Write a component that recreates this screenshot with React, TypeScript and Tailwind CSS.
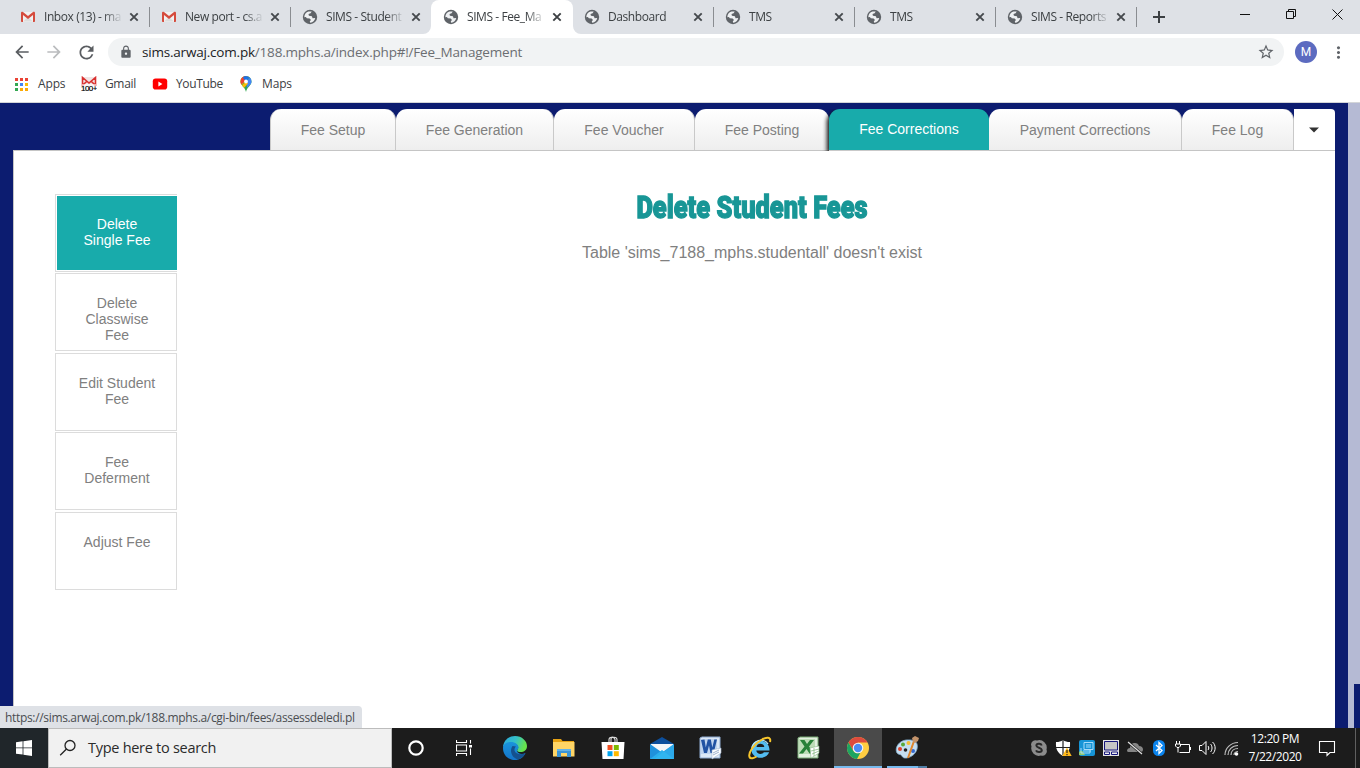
import type { ReactNode } from "react";
import { MdArrowBack, MdArrowForward, MdRefresh, MdLock, MdStarBorder, MdMoreVert } from "react-icons/md";

const GmailIcon = () => (
  <svg width="16" height="16" viewBox="0 0 16 16">
    <path d="M2 3h12v10H2z" fill="#f1f1f1" />
    <path d="M3 12.5 8 8l5 4.5z" fill="#dcdcdc" />
    <path d="M1 4v8.3c0 .5.3.7.8.7H3V6l5 4 5-4v7h1.200c.5 0 .8-.2.8-.7V4c0-1.200-1.200-1.500-2-.9L8 7 3 3.100C2.200 2.500 1 2.800 1 4z" fill="#d54b3d" />
  </svg>
);

const GlobeIcon = () => (
  <svg width="16" height="16" viewBox="0 0 16 16">
    <circle cx="8" cy="8" r="7.200" fill="#5f6368" />
    <path d="M2.300 8.200C2.300 5.500 4 3.100 6.500 2.500L9.700 2.600 8.600 4.300 6.500 5 6.900 6.800 9.900 7.200 10.600 9.200 13.200 9.100C12.900 11.700 10.800 13.500 8.200 13.700L7.800 12.300 9 10.900 7.600 9.400 4.800 9.300 3.900 8.100z" fill="#eef0f2" />
    <path d="m9.500 4.800 2.300-.6 1.300 2.300-2.100.4z" fill="#5f6368" />
  </svg>
);

const CloseX = ({ active }: { active?: boolean }) => (
  <svg width="10" height="10" viewBox="0 0 10 10" className={active ? "text-[#3c4043]" : "text-[#45494d]"}>
    <path d="m1.300 1.300 7.400 7.400m0-7.400L1.300 8.700" stroke="currentColor" strokeWidth="1.900" />
  </svg>
);

type Tab = { title: string; kind: "gmail" | "globe"; active?: boolean; divider?: boolean };

const browserTabs: Tab[] = [
  { title: "Inbox (13) - ma", kind: "gmail", divider: true },
  { title: "New port - cs.a", kind: "gmail", divider: true },
  { title: "SIMS - Student", kind: "globe" },
  { title: "SIMS - Fee_Ma", kind: "globe", active: true },
  { title: "Dashboard", kind: "globe", divider: true },
  { title: "TMS", kind: "globe", divider: true },
  { title: "TMS", kind: "globe", divider: true },
  { title: "SIMS - Reports", kind: "globe", divider: true },
];

const BrowserTab = ({ tab }: { tab: Tab }) => (
  <div className={"relative flex h-[34px] shrink-0 items-center " + (tab.active ? "-ml-px w-[142px] rounded-t-lg bg-white pl-px" : "w-[141px]")}>
    {tab.active && (
      <>
        <svg className="absolute bottom-0 -left-2" width="8" height="8" viewBox="0 0 8 8"><path d="M8 0v8H0a8 8 0 0 0 8-8z" fill="#fff" /></svg>
        <svg className="absolute -right-2 bottom-0" width="8" height="8" viewBox="0 0 8 8"><path d="M0 0v8h8a8 8 0 0 1-8-8z" fill="#fff" /></svg>
      </>
    )}
    <span className="ml-[11px]">{tab.kind === "gmail" ? <GmailIcon /> : <GlobeIcon />}</span>
    <span className="ml-2 w-[79px] mask-r-from-75% text-[12px] tracking-[-0.42px] whitespace-nowrap text-[#3c4043]">{tab.title}</span>
    <span className="ml-[6px]"><CloseX active={tab.active} /></span>
    {tab.divider && <span className="ml-[10px] h-5 w-px shrink-0 bg-[#8a8d91]" />}
  </div>
);

const TitleBar = () => (
  <div className="flex h-[34px] bg-[#dee1e6] pl-[9px]">
    {browserTabs.map((t, i) => <BrowserTab key={i} tab={t} />)}
    <svg className="mt-[10px] ml-[15px]" width="14" height="14" viewBox="0 0 14 14"><path d="M7 1v12M1 7h12" stroke="#3c4043" strokeWidth="2" /></svg>
    <svg className="mt-[9px] ml-auto" width="120" height="11" viewBox="0 0 120 11" fill="none" stroke="#111" strokeWidth="1">
      <path d="M0 5.500h10M46.500 2.500h7v7h-7zM48.500 2.500v-2h7v7h-2M92.500.500l10 10m0-10-10 10" />
    </svg>
  </div>
);

const Toolbar = () => (
  <div className="flex h-9 items-center pl-3">
    <MdArrowBack className="text-[#5a5d61]" size={20} />
    <MdArrowForward className="ml-3 text-[#babcbe]" size={20} />
    <MdRefresh className="ml-3 text-[#5a5d61]" size={21} />
    <div className="ml-[11px] flex h-7 w-[1176px] items-center rounded-full bg-[#f1f3f4] pl-[11px]">
      <MdLock className="text-[#5f6368]" size={14} />
      <span className="ml-[9px] text-[13.5px] tracking-[-0.2px] whitespace-nowrap text-[#6b6e72]">
        <span className="text-[#202124]">sims.arwaj.com.pk</span>/188.mphs.a/index.php#!/Fee_Management
      </span>
      <MdStarBorder className="mr-[9px] ml-auto text-[#5f6368]" size={18} />
    </div>
    <div className="ml-[11px] flex size-[22px] items-center justify-center rounded-full bg-[#5c6bc0] font-['Roboto'] text-[12px] text-white">M</div>
    <MdMoreVert className="ml-[12px] text-[#5f6368]" size={19} />
  </div>
);

const dots = ["#ea4335", "#ea4335", "#ea4335", "#34a853", "#4285f4", "#fbbc05", "#34a853", "#fbaa05", "#fbaa05"];

const Bookmarks = () => (
  <div className="flex h-[28px] items-center pl-[15px] text-[12px] tracking-[-0.35px] text-[#3c4043]">
    <svg width="13" height="13" viewBox="0 0 13 13">
      {dots.map((c, i) => <rect key={i} x={(i % 3) * 5} y={Math.floor(i / 3) * 5} width="3" height="3" fill={c} />)}
    </svg>
    <span className="ml-[10px] w-[28px] tracking-[-0.15px] whitespace-nowrap">Apps</span>
    <svg className="ml-[15px]" width="16" height="16" viewBox="0 0 16 16">
      <path d="M1 1h14v9H1z" fill="#f1e5e5" />
      <path d="M1.500 10V1.500L8 7l6.500-5.500V10M2 9l4-4m8 4-4-4" stroke="#d9302f" strokeWidth="1.600" fill="none" />
      <path d="M1 8h14v7H1z" fill="#fff" fillOpacity=".6" />
      <text x="0" y="15" fontSize="8" fontFamily="Liberation Sans" textLength="16" fill="#000" stroke="#000" strokeWidth=".2">100+</text>
    </svg>
    <span className="ml-2 w-[31px] whitespace-nowrap">Gmail</span>
    <svg className="ml-[16px]" width="16" height="16" viewBox="0 0 16 16"><rect x=".8" y="2.500" width="14.400" height="11" rx="2.800" fill="#f00" /><path d="m6.400 5.600 4 2.400-4 2.400z" fill="#fff" /></svg>
    <span className="ml-2 w-[46px] whitespace-nowrap">YouTube</span>
    <svg className="ml-[16px]" width="16" height="16" viewBox="0 0 16 16">
      <defs><clipPath id="pin"><path d="M8 0a5.500 5.500 0 0 0-5.500 5.500C2.500 9.500 7 11 8 16c1-5 5.500-6.500 5.500-10.500A5.500 5.500 0 0 0 8 0z" /></clipPath></defs>
      <g clipPath="url(#pin)">
        <path d="M0 0h16v16H0z" fill="#34a853" />
        <path d="M0 12 13 0H0z" fill="#fbbc04" />
        <path d="m2 9.500 6-5V0H0v8z" fill="#ea4335" />
        <path d="M5 1.700 8 5.500 13 0H6z" fill="#1a73e8" />
        <path d="m8 5.500 4.500-4.300L16 5 9 12z" fill="#4285f4" />
        <path d="m3 10 5-4.500 2 2L5 13z" fill="#fbbc04" />
      </g>
      <circle cx="8" cy="5.500" r="1.900" fill="#fff" />
    </svg>
    <span className="ml-2 tracking-[-0.15px] whitespace-nowrap">Maps</span>
  </div>
);

const feeTab = "flex h-[42px] shrink-0 items-center justify-center rounded-t-[11px] border-r border-b border-[#c9c9c9] bg-linear-to-b from-white to-[#eeeeee] pt-[2px] text-[#808080]";

const FeeTabs = () => (
  <div className="flex h-[42px] pl-[257px] text-[14px]">
    <div className={feeTab + " w-[126px] border-l"}>Fee Setup</div>
    <div className={feeTab + " w-[158px]"}>Fee Generation</div>
    <div className={feeTab + " w-[141px]"}>Fee Voucher</div>
    <div className={feeTab + " w-[134px] border-r-0"}>Fee Posting</div>
    <div className="z-10 flex h-[42px] w-[160px] items-center justify-center rounded-t-[11px] border-b border-[#c9c9c9] bg-[#18abab] pb-px text-white shadow-[-2px_2px_4px_0px_#111] [clip-path:inset(0_0_0_-7px)]">Fee Corrections</div>
    <div className={feeTab + " w-[193px]"}>Payment Corrections</div>
    <div className={feeTab + " w-[112px]"}>Fee Log</div>
    <div className="flex h-[42px] w-[41px] items-center justify-center rounded-tr-sm border-b border-[#c9c9c9] bg-white pr-[2px]">
      <svg width="10" height="6" viewBox="0 0 10 6"><path d="M0 .500h10L5 5.500z" fill="#333" /></svg>
    </div>
  </div>
);

const menu: { lines: string[]; active?: boolean }[] = [
  { lines: ["Delete", "Single Fee"], active: true },
  { lines: ["Delete", "Classwise", "Fee"] },
  { lines: ["Edit Student", "Fee"] },
  { lines: ["Fee", "Deferment"] },
  { lines: ["Adjust Fee"] },
];

const SideMenu = () => (
  <div className="flex w-[122px] flex-col gap-[1.48px] text-center text-[14px] leading-4">
    {menu.map((m) => (
      <div key={m.lines.join(" ")} className={"h-[78px] border border-[#dcdcdc] " + (m.active ? "border-r-0 pt-px pl-px text-white" : "pl-[2px] text-[#808080]")}>
        <div className={m.active ? "h-[74px] bg-[#18abab] pt-5" : "pt-[21px]"}>
          {m.lines.map((l) => <div key={l}>{l}</div>)}
        </div>
      </div>
    ))}
  </div>
);

const Page = () => (
  <div className="flex h-[625px] bg-[#0c1c70] font-['Liberation_Sans',sans-serif]">
    <div className="ml-[13px] flex h-full w-[1322px] flex-col pt-[6px]">
      <FeeTabs />
      <div className="-mt-px flex flex-1 border-t border-l border-[#c5c5c5] bg-white pt-[43px] pl-[41px]">
        <SideMenu />
        <div className="ml-[5px] flex w-[1140px] flex-col items-center">
          <h1 className="-mt-px h-[28px] w-[400px] scale-x-[0.795] text-center font-['Roboto'] text-[32px] leading-[28px] font-black whitespace-nowrap text-[#189696] [-webkit-text-stroke:1.3px_#189696]">Delete Student Fees</h1>
          <p className="mt-[23px] text-[16px] leading-[18px] text-[#808080]">Table 'sims_7188_mphs.studentall' doesn't exist</p>
        </div>
      </div>
    </div>
    <div className="ml-[13px] flex w-3 flex-col items-end justify-end bg-[#b5bad4]">
      <div className="h-[44px] w-[6px] bg-[#0c1c70]" />
    </div>
  </div>
);

const AppIcon = ({ children }: { children: ReactNode }) => (
  <svg width="24" height="24" viewBox="0 0 24 24">{children}</svg>
);

const Cell = ({ children, on }: { children: ReactNode; on?: boolean }) => (
  <div className={"flex h-10 shrink-0 items-center justify-center " + (on ? "ml-px w-12 border-b-2 border-[#76b9ed] bg-[#4a4a4a] pt-[2px]" : "w-[49px]")}>{children}</div>
);

const Launchers = () => (
  <>
    <div className="flex w-12 items-center justify-center">
      <svg width="18" height="18" viewBox="0 0 18 18"><circle cx="9" cy="9" r="6.700" fill="none" stroke="#fff" strokeWidth="2.200" /></svg>
    </div>
    <div className="flex w-12 items-center justify-center">
      <svg width="16" height="16" viewBox="0 0 16 16" fill="none" stroke="#fff" strokeWidth="1.100"><path d="M.5 0v2.500h10V0M.5 16v-2.500h10V16M.5 5h10v6H.5zM14.500 0v3.500M14.500 8.500V15" /><path d="M13 5h3v2.500h-3z" fill="#fff" stroke="none" /></svg>
    </div>
    <div className="w-[2px]" />
    <Cell>
      <AppIcon>
        <defs>
          <linearGradient id="e1" x1="0" y1="0" x2="1" y2=".3"><stop offset="0" stopColor="#2aa6de" /><stop offset=".55" stopColor="#35c1c9" /><stop offset="1" stopColor="#66e34c" /></linearGradient>
          <linearGradient id="e2" x1="0" y1="0" x2="0" y2="1"><stop offset="0" stopColor="#1a94dc" /><stop offset="1" stopColor="#1474c8" /></linearGradient>
        </defs>
        <path d="M0 11C.6 4.500 5.500 0 12 0c7 0 12 5 12 10 0 4-3 6-6.500 6-3 0-4-1.500-3-2.700C17 10 12 6.500 8 7 4 7.500 1 9 0 11z" fill="url(#e1)" />
        <path d="M0 12C0 8 4 6 8 6c4.500 0 8 3 7.500 6-.3 1.500-1.500 1-1.500 2.500 0 3 5 4.500 8.500 2.500C20.500 21.500 16.500 24 12 24 5 24 0 19 0 12z" fill="url(#e2)" />
        <path d="M9.500 10c-3 4-1.500 11 5 13.500 3.500-.6 6.300-3 8-6.500-4 2.300-10 1.500-11-2.500-.3-1.500.500-3 1.500-4z" fill="#15518e" />
      </AppIcon>
    </Cell>
    <Cell>
      <AppIcon>
        <path d="M1 3h8l1.500 2H22v15H1z" fill="#e8a314" /><path d="M1 6h21.500v14.500H1z" fill="#ffd566" />
        <path d="M5 21v-8h14v8h-4v-4H9v4z" fill="#3a94d6" /><path d="M5 13h14v2H5z" fill="#63b3e8" />
      </AppIcon>
    </Cell>
    <Cell>
      <AppIcon>
        <path d="M8 7V3.500C8 .8 13 0 14 3.500V7M10 7V3c0-2.500 6-2.500 6 .5V7" fill="none" stroke="#ddd" strokeWidth="1.100" />
        <path d="M.500 6h23l-1 17h-21z" fill="#fff" />
        <path d="M6.500 9h5v5h-5z" fill="#f25022" /><path d="M12.800 9h5v5h-5z" fill="#7fba00" /><path d="M6.500 15.200h5v5h-5z" fill="#00a4ef" /><path d="M12.800 15.200h5v5h-5z" fill="#ffb900" />
      </AppIcon>
    </Cell>
    <Cell>
      <AppIcon>
        <path d="M0 8 12 1l12 7v4H0z" fill="#0d4f9c" /><path d="M1 8h22v10H1z" fill="#f4f6f8" /><path d="m0 8 12 8.500L24 8v15H0z" fill="#1f91dc" /><path d="m0 23 12-9 12 9z" fill="#2aaeec" /><path d="M24 8 4 23h20z" fill="#36b9f3" fillOpacity=".6" />
      </AppIcon>
    </Cell>
    <Cell>
      <AppIcon>
        <path d="M1 2 3 1h18v21H1z" fill="#dce8f6" stroke="#8eaad0" /><path d="M2 3h16v15H2z" fill="#c0d4ee" />
        <path d="m2 4 3.500-.5 1.300 8 2-8h3l1.500 8 2-8H18L14.700 17h-3.200L10 9.500 8 17H5z" fill="#2152a3" />
        <path d="m13 14 9-2v5l-9 6z" fill="#fff" stroke="#a5b9d4" strokeWidth=".6" /><path d="m14 17 6-3m-6 5 6-3" stroke="#7591b8" strokeWidth=".7" />
      </AppIcon>
    </Cell>
    <Cell>
      <AppIcon>
        <path d="M21.500 14.500H8.300c.3 4 6 4.500 7.500 1.800h5.400C18.500 24 4 24 3.200 13.500 3 1 21.800 1.500 21.500 14.500zM8.500 11h7.800c-.3-4.500-7.500-4.500-7.800 0z" fill="#54bdf1" />
        <path d="M4 14C3.500 4 16 1 20 8" fill="none" stroke="#b5e6fb" strokeWidth="1.300" />
        <path d="M22 6c1.500-5.500-4-5-8-2.500C6 8 0 16.500 1.500 21c1 2.300 4.500 1.200 7-.5" fill="none" stroke="#f7c52c" strokeWidth="2" />
      </AppIcon>
    </Cell>
    <Cell>
      <AppIcon>
        <path d="M1 2 3 1h18v21H1z" fill="#e2f0df" stroke="#79aa74" /><path d="M2 3h16v15H2z" fill="#bcdcb6" />
        <path d="M3 4h4.500l2.500 4 3-4h4l-5 6.500 5 7h-4.500l-3-4.500L6 17.500H2l5.500-7z" fill="#278137" />
        <path d="m13 12 9-2v7l-8 5z" fill="#fff" stroke="#8ab887" strokeWidth=".6" /><path d="m14 15 8-2m-7 5 7-3m-5-3v8" stroke="#7fb57a" strokeWidth=".7" />
      </AppIcon>
    </Cell>
    <Cell on>
      <AppIcon>
        <circle cx="12" cy="12" r="11" fill="#ffcd41" />
        <path d="M2.470 6.500A11 11 0 0 1 21.530 6.500H12L7.200 14.700z" fill="#dd4b3e" />
        <path d="M2.470 6.500 7.200 14.700c1.800 3 5 3.200 7.300 1.900L11 23A11 11 0 0 1 2.470 6.500z" fill="#1da462" />
        <circle cx="12" cy="12" r="5.300" fill="#f3f5f8" /><circle cx="12" cy="12" r="4.200" fill="#4c8bf5" />
      </AppIcon>
    </Cell>
    <div className="flex h-10 w-[49px] flex-col items-center">
      <div className="flex h-[38px] items-center pt-[2px]">
        <AppIcon>
          <path d="M11 4C4 5 0 11 1.500 16c1 3 4 2 5 3.500 1 2 3 3.500 7 2 7-2 10-9 8.500-13.500C21 4.500 17 3.500 11 4z" fill="#c6dff1" stroke="#7fa9c9" strokeWidth=".8" />
          <circle cx="8" cy="8.500" r="2" fill="#57a839" /><circle cx="13.500" cy="7" r="2" fill="#f6bd32" /><circle cx="5" cy="13" r="2" fill="#e0452f" /><circle cx="10.500" cy="14" r="1.800" fill="#222" /><circle cx="18" cy="15" r="2" fill="#3569cf" />
          <path d="m13 22 6-17" stroke="#df872e" strokeWidth="2" /><path d="m18 6-1-4 3-2 4 2-1 3-3 2z" fill="#c3936b" />
        </AppIcon>
      </div>
      <div className="flex h-[2px] w-10"><div className="w-[31px] bg-[#76b9ed]" /><div className="w-[9px] bg-[#4f7ea5]" /></div>
    </div>
  </>
);

const TrayIcon = ({ children }: { children: ReactNode }) => (
  <div className="flex w-6 items-center justify-center">
    <svg width="18" height="18" viewBox="0 0 18 18" fill="none">{children}</svg>
  </div>
);

const Tray = () => (
  <div className="ml-auto flex">
    <TrayIcon>
      <path d="M1 5.500A4.500 4.500 0 0 1 7 1.500a7.500 7.500 0 0 1 9.500 9A4.500 4.500 0 0 1 11 16.500a7.500 7.500 0 0 1-9.500-9z" fill="#8c8c8c" />
      <path d="M11.700 6.500C11 4 6.300 4.300 6.400 6.800c.1 2.200 5.300 1.700 5.400 4.200.1 2.500-4.800 2.800-5.800.3" stroke="#292929" strokeWidth="2" />
    </TrayIcon>
    <TrayIcon>
      <path d="M9 1c2 1.500 4 2 7 2 .5 7-1.500 11-7 14C3.500 14 1.500 10 2 3c3 0 5-.5 7-2z" fill="#fff" /><path d="M9 1v15M2 8.500h14" stroke="#222" strokeWidth="1.200" />
      <path d="m13 8.500 4.700 8.500H8.300z" fill="#ffb91a" /><path d="M13 11v3m0 1v1.200" stroke="#222" strokeWidth="1.200" />
    </TrayIcon>
    <TrayIcon>
      <rect x="1" y="1" width="16" height="16" rx="2" fill="#1694d6" /><path d="M1 13c3-3 4 0 6 3H1z" fill="#91c86e" /><path d="M6 3.500h9v7H6zM8 6h5M8 8h5M3 9v5h9v-3M5 12h8" stroke="#a8dcfa" />
    </TrayIcon>
    <TrayIcon>
      <path d="M1 1h16v16H1z" fill="#e5e5e5" /><path d="M2.500 2.500h13v8.500h-13z" fill="#c5c5c5" stroke="#15157c" /><path d="M2.500 13h5v2.500h-5zM9.500 13h6v2.500h-6z" fill="#eee" stroke="#15157c" />
    </TrayIcon>
    <TrayIcon>
      <path d="M1 12c0-2 1.500-3 3-3 0-3 2-5 5-5 2 0 3.500 1.200 4 3 2.500 0 4 1.200 4 3.500 0 1.700-1 2.500-2.500 2.500H3c-1 0-2-.5-2-1z" fill="#858585" /><path d="m2 3 14 12" stroke="#1c1c1c" strokeWidth="2.400" /><path d="m2 3 14 12" stroke="#e1e1e1" strokeWidth="1.200" />
    </TrayIcon>
    <TrayIcon>
      <rect x="3" y="1" width="12" height="16" rx="5.500" fill="#0a84ee" /><path d="m6 6 6 5.500-3 3V3.500l3 3L6 12" stroke="#fff" strokeWidth="1.300" />
    </TrayIcon>
    <TrayIcon>
      <path d="M6.500 5.500h9v8H5.500M16.500 8v3M2.500 2v3M5.500 2v3M1.500 5h5v2L5 8.500H3L1.500 7zM4 9v4.500" stroke="#fff" />
    </TrayIcon>
    <TrayIcon>
      <path d="M1.500 6.500H4l4-4v13l-4-4H1.500zM10 7c1 1 1 3 0 4M12.500 5c2 2 2 6 0 8M14.500 3c3.500 3 3.500 9 0 12" stroke="#fff" />
    </TrayIcon>
    <TrayIcon>
      <path d="M3 16C3 9 9 3.500 16 3.500M6 16c0-5 4-9.500 10-9.500M9 16c0-4 3-6.500 7-6.500M12 16c0-2 2-3.500 4-3.500" stroke="#bdbdbd" strokeWidth="1.200" /><circle cx="14.500" cy="15" r="1.800" fill="#fff" />
    </TrayIcon>
    <div className="ml-1 flex w-[56px] flex-col items-center pt-[2px] text-[12px] leading-[18px] tracking-[-0.42px] whitespace-nowrap text-white">
      <span>12:20 PM</span><span>7/22/2020</span>
    </div>
    <div className="ml-[12px] flex w-6 items-center justify-center">
      <svg width="18" height="18" viewBox="0 0 18 18" fill="none"><path d="M1.500 2.500h15v11H12l-3 3v-3H1.500z" stroke="#fff" strokeWidth="1.100" /></svg>
    </div>
    <div className="mr-1 ml-4 w-px bg-[#606060]" />
  </div>
);

const Taskbar = () => (
  <div className="flex h-10 bg-[#1c1c1c]">
    <div className="flex w-12 items-center justify-center bg-[#20262a]">
      <svg width="16" height="16" viewBox="0 0 16 16"><path d="m0 2.200 6.600-.9v6.200H0zM7.400 1.200 16 0v7.500H7.400zM0 8.300h6.600v6.300L0 13.700zM7.400 8.300H16V16l-8.600-1.200z" fill="#fff" /></svg>
    </div>
    <div className="flex w-[344px] items-center border border-[#bcbcbc] bg-[#f1f1f1] pl-[10px]">
      <svg width="18" height="18" viewBox="0 0 18 18" fill="none" stroke="#222" strokeWidth="1.300"><circle cx="11" cy="6.500" r="5" /><path d="m7.500 10-6.300 6.300" /></svg>
      <span className="ml-[11px] text-[14.5px] tracking-[-0.28px] whitespace-nowrap text-[#2b2b2b]">Type here to search</span>
    </div>
    <Launchers />
    <Tray />
  </div>
);

export default function App() {
  return (
    <div className="relative flex h-[768px] w-[1360px] flex-col overflow-hidden bg-white font-['Open_Sans','Noto_Sans',sans-serif]">
      <TitleBar />
      <Toolbar />
      <div className="h-[33px] shrink-0 border-b border-[#d3d5d8]"><Bookmarks /></div>
      <Page />
      <Taskbar />
      <div className="absolute bottom-10 left-0 z-20 flex h-[22px] w-[362px] items-center rounded-tr bg-[#dee1e6] pt-px pl-[5px] text-[12px] tracking-[-0.33px] whitespace-nowrap text-[#4a4d51]">
        https://sims.arwaj.com.pk/188.mphs.a/cgi-bin/fees/assessdeledi.pl
      </div>
    </div>
  );
}
